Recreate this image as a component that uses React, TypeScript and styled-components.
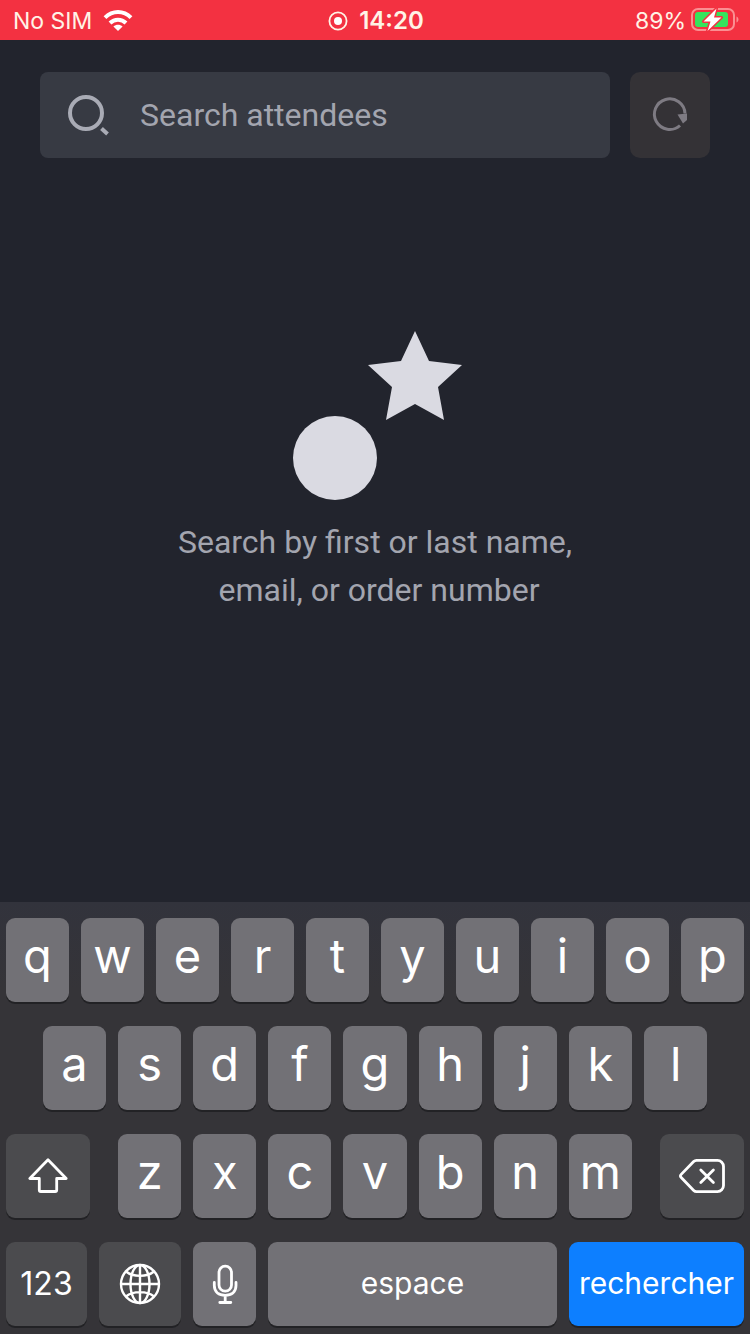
import React from "react";
import styled, { createGlobalStyle } from "styled-components";

const GlobalStyle = createGlobalStyle`
  *, *::before, *::after { box-sizing: border-box; }
  body { margin: 0; background: #22242d; }
  button, input { font: inherit; color: inherit; border: 0; margin: 0; }
  svg { display: block; flex: none; }
`;

const uiFont = `Inter, "Liberation Sans", sans-serif`;
const appFont = `Roboto, "Liberation Sans", sans-serif`;

const Screen = styled.div`
  display: flex;
  flex-direction: column;
  min-height: 100vh;
  background: #22242d;
  font-family: ${appFont};
`;

const StatusBar = styled.header`
  display: grid;
  grid-template-columns: 1fr auto 1fr;
  align-items: center;
  height: 40px;
  padding: 2px 11px 0 13px;
  background: #f33141;
  color: #fff3e6;
  font-family: ${uiFont};
  font-size: 23px;
  line-height: 38px;
`;

const StatusGroup = styled.div<{ $end?: boolean; $gap: number }>`
  display: flex;
  align-items: center;
  justify-content: ${(p) => (p.$end ? "flex-end" : "flex-start")};
  gap: ${(p) => p.$gap}px;
`;

const Clock = styled.time`
  font-size: 24px;
  font-weight: 600;
`;

const Main = styled.main`
  flex: 1;
  display: flex;
  flex-direction: column;
`;

const SearchForm = styled.form`
  display: flex;
  gap: 20px;
  padding: 32px 40px 0;
`;

const SearchField = styled.label`
  flex: 1;
  min-width: 0;
  display: flex;
  align-items: center;
  gap: 30px;
  height: 86px;
  padding: 0 26px;
  border-radius: 8px;
  background: #373a43;
  color: #a9abb5;
`;

const SearchInput = styled.input`
  flex: 1;
  min-width: 0;
  padding: 0;
  background: none;
  outline: none;
  font-size: 32px;
  line-height: 40px;
  &::placeholder { color: #a3a5af; opacity: 1; }
`;

const RefreshButton = styled.button`
  display: flex;
  align-items: center;
  justify-content: center;
  width: 80px;
  height: 86px;
  padding: 0;
  border-radius: 10px;
  background: #343236;
  color: #7e7b83;
`;

const EmptyState = styled.section`
  display: flex;
  flex-direction: column;
  align-items: center;
  gap: 18px;
  padding-top: 173px;
`;

const Hint = styled.p`
  margin: 0;
  color: #a3a5af;
  font-size: 32px;
  line-height: 48px;
  text-align: center;
  white-space: pre-wrap;
`;

const Keyboard = styled.div`
  display: flex;
  flex-direction: column;
  gap: 24px;
  padding: 16px 6px 8px;
  background: linear-gradient(#32333c, #353438 20%, #353438);
  color: #fff;
  font-family: ${uiFont};
`;

const KeyRow = styled.div<{ $inset?: boolean }>`
  display: flex;
  gap: 12px;
  padding: 0 ${(p) => (p.$inset ? "5%" : "0")};
`;

const Letters = styled.div`
  flex: 513;
  display: flex;
  gap: 12px;
  margin: 0 16px;
`;

const tones = { light: "#727176", dark: "#4b4b4e", blue: "#0d7fff" };

const Key = styled.button<{ $tone?: keyof typeof tones; $grow?: number }>`
  flex: ${(p) => p.$grow ?? 1} 1 0;
  min-width: 0;
  display: flex;
  align-items: center;
  justify-content: center;
  height: 84px;
  padding: 0;
  border-radius: 9px;
  background: ${(p) => tones[p.$tone ?? "light"]};
  box-shadow: 0 2px 0 #222225;
`;

const LetterKey = styled(Key)`
  padding-bottom: 8px;
  font-size: 47px;
  line-height: 60px;
`;

const WordKey = styled(Key)`
  padding-bottom: 2px;
  font-size: 30px;
  line-height: 40px;
`;

const NumberKey = styled(Key)`
  font-size: 32px;
  line-height: 40px;
`;

const WifiIcon = () => (
  <svg width="30" height="24" viewBox="0 1 30 24" fill="none" stroke="#fff" strokeWidth="4">
    <path d="M2 9.6C9.5 2.2 20.500 2.200 28 9.600" />
    <path d="M7 15C11.500 10.600 18.500 10.600 23 15" />
    <path d="M15 23l-4.600-4.600c2.600-2.300 6.600-2.300 9.200 0z" fill="#fff" stroke="none" />
  </svg>
);

const RecordIcon = () => (
  <svg width="20" height="20" viewBox="0 0 20 20">
    <circle cx="10" cy="10" r="8.600" fill="none" stroke="#fff3e6" strokeWidth="1.800" />
    <circle cx="10" cy="10" r="4" fill="#fff" />
  </svg>
);

const BatteryIcon = () => (
  <svg width="48" height="26" viewBox="0 0 48 26">
    <rect x="1" y="1" width="42" height="21" rx="6" fill="none" stroke="#fa8f92" strokeWidth="2" />
    <path d="M45.500 8.500c2.600 1 2.600 5 0 6z" fill="#fa8f92" />
    <rect x="4" y="4" width="33" height="15" rx="3" fill="#36e35c" />
    <path
      d="M25.500 0.500L12.500 13.500h7L16.500 23L30.500 9.500h-7.500z"
      fill="#fff"
      stroke="#f33141"
      strokeWidth="3"
      paintOrder="stroke"
      strokeLinejoin="round"
    />
  </svg>
);

const SearchIcon = () => (
  <svg width="44" height="44" viewBox="0 0 44 44" fill="none" stroke="currentColor" strokeWidth="4">
    <circle cx="20" cy="20" r="16" />
    <path d="M35.500 35.500l6 5.500" />
  </svg>
);

const RefreshIcon = () => (
  <svg width="40" height="40" viewBox="0 0 40 40">
    <path d="M30 30.500A15.300 15.300 0 1 1 35 18.500" fill="none" stroke="currentColor" strokeWidth="3" />
    <path d="M27.500 19.500L37 18.500V25L33 28.500z" fill="currentColor" />
  </svg>
);

const EmptyArt = () => (
  <svg width="174" height="169" viewBox="0 0 174 169" fill="#dadae2" aria-hidden="true">
    <path d="M127 0L141 30L174 34L150 56L156 89L127 73L98 89L104 56L80 34L113 30z" />
    <circle cx="47" cy="127" r="42" />
  </svg>
);

const ShiftIcon = () => (
  <svg width="42" height="38" viewBox="0 0 42 38" fill="none" stroke="#fff" strokeWidth="2.800" strokeLinejoin="round">
    <path d="M21 2.800L2.800 21.500H12.300V33a1.500 1.500 0 0 0 1.500 1.500H28.200a1.500 1.500 0 0 0 1.500-1.500V21.500H39.200z" />
  </svg>
);

const DeleteIcon = () => (
  <svg width="48" height="38" viewBox="0 0 48 38" fill="none" stroke="#fff" strokeWidth="2.800" strokeLinecap="round" strokeLinejoin="round">
    <path d="M18.500 3.400H39.500a6 6 0 0 1 6 6V28.600a6 6 0 0 1-6 6H18.500a4 4 0 0 1-2.800-1.200L3.200 20.600a2.300 2.300 0 0 1 0-3.200L15.700 4.600a4 4 0 0 1 2.800-1.200z" />
    <path d="M22.800 13l12.600 12.600M35.400 13L22.800 25.600" />
  </svg>
);

const GlobeIcon = () => (
  <svg width="42" height="42" viewBox="0 0 42 42" fill="none" stroke="#fff" strokeWidth="2.400">
    <circle cx="21" cy="21" r="19" />
    <ellipse cx="21" cy="21" rx="9.500" ry="19" />
    <path d="M21 2V40M2 21H40M7 8.500C14 14.300 28 14.300 35 8.500M7 33.500C14 27.700 28 27.700 35 33.500" />
  </svg>
);

const MicIcon = () => (
  <svg width="28" height="42" viewBox="0 0 28 42" fill="none" stroke="#fff" strokeWidth="2.800" strokeLinecap="round">
    <rect x="8" y="3.200" width="12.500" height="25" rx="6.200" />
    <path d="M3.300 19.500V22.500C3.300 29 8 32.300 14.200 32.300S25 29 25 22.500V19.500M14.200 32.500V39M8.800 39.500H19.800" />
  </svg>
);

const letterKeys = (row: string) =>
  row.split("").map((letter) => (
    <LetterKey key={letter} type="button">
      {letter}
    </LetterKey>
  ));

export default function App() {
  return (
    <Screen>
      <GlobalStyle />
      <StatusBar>
        <StatusGroup $gap={11}>
          <span>No SIM</span>
          <WifiIcon />
        </StatusGroup>
        <StatusGroup $gap={11}>
          <RecordIcon />
          <Clock>14:20</Clock>
        </StatusGroup>
        <StatusGroup $gap={5} $end>
          <span>89%</span>
          <BatteryIcon />
        </StatusGroup>
      </StatusBar>

      <Main>
        <SearchForm role="search" onSubmit={(e) => e.preventDefault()}>
          <SearchField>
            <SearchIcon />
            <SearchInput type="text" placeholder="Search attendees" aria-label="Search attendees" />
          </SearchField>
          <RefreshButton type="button" aria-label="Refresh">
            <RefreshIcon />
          </RefreshButton>
        </SearchForm>
        <EmptyState>
          <EmptyArt />
          <Hint>{"Search by first or last name,\n email, or order number"}</Hint>
        </EmptyState>
      </Main>

      <Keyboard role="group" aria-label="Keyboard">
        <KeyRow>{letterKeys("qwertyuiop")}</KeyRow>
        <KeyRow $inset>{letterKeys("asdfghjkl")}</KeyRow>
        <KeyRow>
          <Key type="button" $tone="dark" $grow={84} aria-label="Shift">
            <ShiftIcon />
          </Key>
          <Letters>{letterKeys("zxcvbnm")}</Letters>
          <Key type="button" $tone="dark" $grow={84} aria-label="Delete">
            <DeleteIcon />
          </Key>
        </KeyRow>
        <KeyRow>
          <NumberKey type="button" $tone="dark" $grow={81}>
            123
          </NumberKey>
          <Key type="button" $tone="dark" $grow={82} aria-label="Next keyboard">
            <GlobeIcon />
          </Key>
          <Key type="button" $grow={63} aria-label="Dictation">
            <MicIcon />
          </Key>
          <WordKey type="button" $grow={289}>
            espace
          </WordKey>
          <WordKey type="button" $tone="blue" $grow={175}>
            rechercher
          </WordKey>
        </KeyRow>
      </Keyboard>
    </Screen>
  );
}
